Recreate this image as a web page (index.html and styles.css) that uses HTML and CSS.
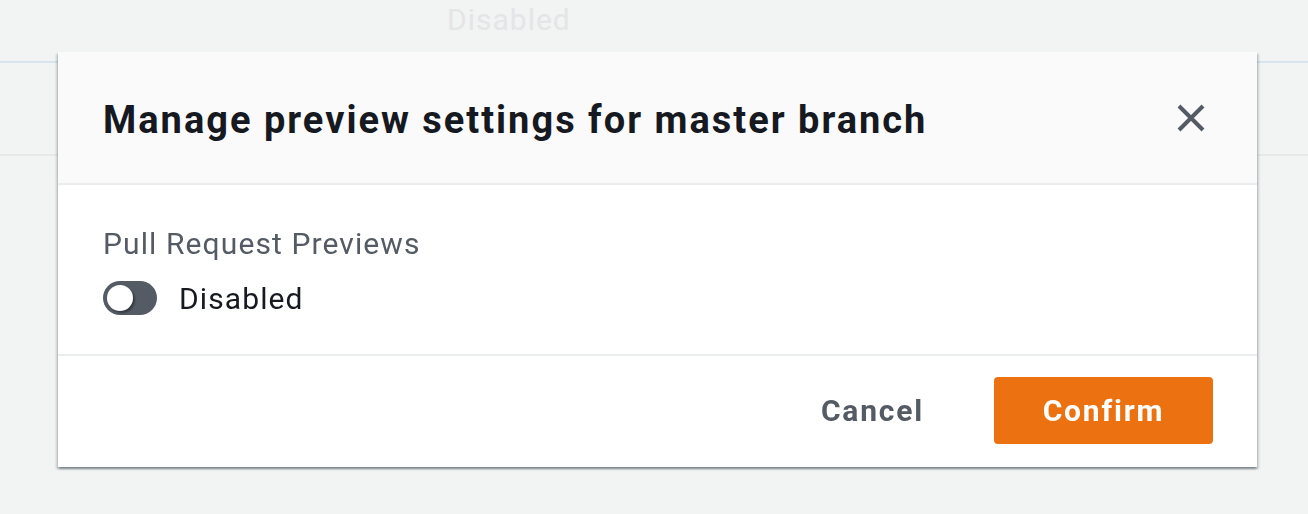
FILE: index.html
```html
<!DOCTYPE html>
<html lang="en">
<head>
    <meta charset="UTF-8">
    <meta name="viewport" content="width=device-width, initial-scale=1.0">
    <title>Manage preview settings</title>
    <link rel="stylesheet" href="styles.css">
</head>
<body>
    <div class="page">
        <div class="page-row">
            <span class="page-status">Disabled</span>
        </div>
        <div class="page-row page-row-blank"></div>
    </div>

    <div class="overlay">
        <div class="modal" role="dialog" aria-labelledby="modal-title">
            <div class="modal-header">
                <h2 id="modal-title">Manage preview settings for master branch</h2>
                <button class="close-btn" aria-label="Close">
                    <svg width="28" height="28" viewBox="0 0 28 28">
                        <path d="M2 2 L26 26 M26 2 L2 26" stroke="#545b64" stroke-width="4" fill="none"/>
                    </svg>
                </button>
            </div>
            <div class="modal-body">
                <div class="field-label">Pull Request Previews</div>
                <label class="toggle-row">
                    <span class="toggle"><span class="toggle-knob"></span></span>
                    <span class="toggle-text">Disabled</span>
                </label>
            </div>
            <div class="modal-footer">
                <button class="btn btn-link">Cancel</button>
                <button class="btn btn-primary">Confirm</button>
            </div>
        </div>
    </div>
</body>
</html>
```

FILE: styles.css
```css
* {
    margin: 0;
    padding: 0;
    box-sizing: border-box;
}

body {
    font-family: Roboto, "Noto Sans", Arial, sans-serif;
    background: #f2f3f3;
    height: 100vh;
    overflow: hidden;
}

/* page behind the dialog, dimmed */
.page-row {
    height: 63px;
    padding: 2px 0 0 447px;
    border-bottom: 2px solid #d7e5ee;
}

.page-row-blank {
    height: 93px;
    padding: 0;
    border-bottom: 2px solid #e7e9e9;
}

.page-status {
    font-size: 30px;
    line-height: 36px;
    letter-spacing: 1px;
    color: #e3e5e6;
}

.overlay {
    position: fixed;
    top: 0;
    left: 0;
    right: 0;
    bottom: 0;
    padding: 52px 51px 0 58px;
}

.modal {
    background: #ffffff;
    box-shadow: 0 2px 2px 0 rgba(0, 28, 36, 0.3),
                2px 2px 2px 0 rgba(0, 28, 36, 0.15),
                -2px 2px 2px 0 rgba(0, 28, 36, 0.15);
}

.modal-header {
    display: flex;
    align-items: center;
    justify-content: space-between;
    height: 133px;
    padding: 4px 44px 0 45px;
    background: #fafafa;
    border-bottom: 2px solid #eaeded;
}

.modal-header h2 {
    font-size: 38px;
    line-height: 46px;
    font-weight: 700;
    letter-spacing: 2px;
    color: #16191f;
}

.close-btn {
    display: flex;
    background: none;
    border: none;
    padding: 8px;
    margin-top: -4px;
    cursor: pointer;
}

.modal-body {
    padding: 41px 45px 38px;
}

.field-label {
    font-size: 30px;
    line-height: 36px;
    letter-spacing: 1.1px;
    color: #545b64;
}

.toggle-row {
    display: flex;
    align-items: center;
    gap: 22px;
    margin-top: 18px;
    height: 36px;
}

.toggle {
    position: relative;
    width: 54px;
    height: 34px;
    border-radius: 17px;
    background: #545b64;
}

.toggle-knob {
    position: absolute;
    top: 4px;
    left: 4px;
    width: 26px;
    height: 26px;
    border-radius: 50%;
    background: #ffffff;
    box-shadow: 2px 2px 2px rgba(0, 0, 0, 0.35);
}

.toggle-text {
    font-size: 30px;
    line-height: 36px;
    letter-spacing: 1.1px;
    color: #16191f;
    padding-top: 2px;
}

.modal-footer {
    display: flex;
    justify-content: flex-end;
    align-items: center;
    gap: 22px;
    padding: 21px 44px 23px;
    border-top: 2px solid #eaeded;
}

.btn {
    font-family: inherit;
    font-size: 30px;
    font-weight: 700;
    letter-spacing: 1.8px;
    height: 67px;
    border: none;
    border-radius: 4px;
    cursor: pointer;
}

.btn-link {
    background: none;
    color: #545b64;
    padding: 0 48px;
}

.btn-primary {
    width: 219px;
    background: #ec7211;
    color: #ffffff;
}
```
